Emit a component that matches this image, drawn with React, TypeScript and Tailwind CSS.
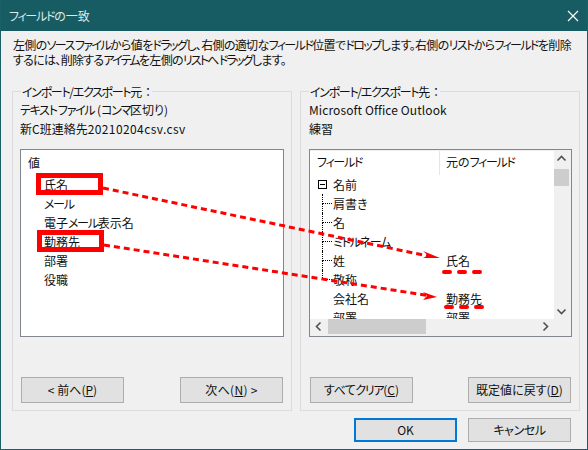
import React from "react";

function K({ children }: { children: React.ReactNode }) {
  return <span className="tracking-[-1.3px]">{children}</span>;
}

function K1({ children }: { children: React.ReactNode }) {
  return <span className="tracking-[-1.6px]">{children}</span>;
}

function K2({ children }: { children: React.ReactNode }) {
  return <span className="tracking-[-1.8px]">{children}</span>;
}

function Btn({ children, primary, cls }: { children: React.ReactNode; primary?: boolean; cls: string }) {
  return (
    <button
      className={`w-[103px] flex items-center justify-center bg-[#e1e1e1] text-[12px] text-[#111] ${
        primary ? "border-2 border-[#0078d7]" : "border border-[#adadad]"
      } ${cls}`}
    >
      {children}
    </button>
  );
}

function Chevron({ d }: { d: string }) {
  return (
    <svg width="15" height="15" viewBox="0 0 15 15" fill="none" stroke="#505050" strokeWidth="1.6">
      <path d={d} />
    </svg>
  );
}

const leftItems: React.ReactNode[] = [
  "氏名",
  <K>メール</K>,
  <>電子<K>メール</K>表示名</>,
  "勤務先",
  "部署",
  "役職",
];

function Connector({ last }: { last?: boolean }) {
  return (
    <div className="w-[10px] ml-[12px] h-full shrink-0 flex flex-col">
      <div className="h-[10px] border-l border-b border-dotted border-black" />
      {!last && <div className="flex-1 border-l border-dotted border-black" />}
    </div>
  );
}

const treeRows: { name: React.ReactNode; src?: string; connector?: boolean; last?: boolean }[] = [
  { name: "肩書き", connector: true },
  { name: "名", connector: true },
  { name: <K>ミドルネーム</K>, connector: true },
  { name: "姓", src: "氏名", connector: true },
  { name: "敬称", connector: true, last: true },
  { name: "会社名", src: "勤務先" },
  { name: "部署", src: "部署" },
];

export default function App() {
  return (
    <div
      className="relative w-[588px] h-[450px] overflow-hidden flex flex-col bg-[#f0f0f0] border-x border-b border-[#1b6066] text-[12px] leading-[16px] text-[#111] [font-feature-settings:'palt']"
      style={{ fontFamily: '"Noto Sans CJK JP", "Noto Sans", sans-serif' }}
    >
      <div className="h-[31px] shrink-0 bg-[#175c62] flex items-center justify-between pl-[8px] pr-[8px] text-[#dfe9ea]">
        <span><K>フィールド</K>の一致</span>
        <svg width="12" height="12" viewBox="0 0 12 12" stroke="#fff" strokeWidth="1.2" fill="none">
          <path d="M1 1L11 11M11 1L1 11" />
        </svg>
      </div>

      <div className="px-[12px] pt-[6px] whitespace-nowrap leading-[15px]">
        <div className="tracking-[-0.65px]">
          左側の<K1>ソース ファイル</K1>から値を<K1>ドラッグ</K1>し、右側の適切な<K1>フィールド</K1>位置で<K1>ドロップ</K1>します。右側の<K1>リスト</K1>から<K1>フィールド</K1>を削除
        </div>
        <div className="tracking-[-0.7px]">
          するには、削除する<K2>アイテム</K2>を左側の<K2>リスト</K2>へ<K2>ドラッグ</K2>します。
        </div>
      </div>

      <div className="flex gap-[8px] pl-[11px] mt-[24px]">
        <div className="w-[280px] h-[320px] border border-[#dcdcdc] flex flex-col px-[7px] whitespace-nowrap">
          <div className="-mt-[8px] ml-[1px] w-fit bg-[#f0f0f0] px-[1px] h-[16px]"><K>インポート/エクスポート</K>元 ：</div>
          <div className="h-[19px] leading-[19px]"><K>テキスト ファイル</K> (<K>コンマ</K>区切り)</div>
          <div className="h-[20px] leading-[20px]">新C班連絡先<span className="tracking-[0.4px]">20210204csv.csv</span></div>
          <div className="mt-[10px] h-[188px] bg-white border border-[#82878f] pl-[7px] pt-[3px]">
            <div className="h-[19px] leading-[19px]">値</div>
            <div className="pl-[16px] mt-[3px]">
              {leftItems.map((t, i) => (
                <div key={i} className="h-[19px] leading-[19px]">{t}</div>
              ))}
            </div>
          </div>
          <div className="mt-[40px] flex justify-between px-[1px]">
            <Btn cls="h-[26px]">
              <span>&lt; 前へ(<u>P</u>)</span>
            </Btn>
            <Btn cls="h-[26px]">
              <span className="tracking-[0.3px]">次へ(<u>N</u>) &gt;</span>
            </Btn>
          </div>
        </div>

        <div className="w-[280px] h-[320px] border border-[#dcdcdc] flex flex-col px-[8px] whitespace-nowrap">
          <div className="-mt-[8px] w-fit bg-[#f0f0f0] px-[1px] h-[16px]"><K>インポート/エクスポート</K>先 ：</div>
          <div className="h-[19px] leading-[19px] tracking-[0.1px]">Microsoft Office Outlook</div>
          <div className="h-[20px] leading-[20px]">練習</div>
          <div className="mt-[10px] h-[188px] w-[263px] bg-[#f0f0f0] border border-[#82878f] flex flex-col overflow-hidden">
            <div className="flex h-[169px] pt-[1px]">
              <div className="w-[244px] h-[168px] bg-white overflow-hidden">
                <div className="flex h-[24px]">
                  <div className="w-[130px] h-full pl-[7px] pb-[2px] border-r border-[#e5e5e5] flex items-center"><K>フィールド</K></div>
                  <div className="pl-[6px] pb-[2px] flex items-center">元の<K>フィールド</K></div>
                </div>
                <div className="flex h-[19px] items-center">
                  <div className="ml-[8px] w-[9px] h-[9px] border border-black flex items-center justify-center shrink-0">
                    <div className="w-[5px] h-px bg-black" />
                  </div>
                  <span className="ml-[6px]">名前</span>
                </div>
                {treeRows.map((r, i) => (
                  <div key={i} className="flex h-[19px] items-center leading-[19px]">
                    <div className="w-[23px] h-full shrink-0 flex">{r.connector && <Connector last={r.last} />}</div>
                    <div className="w-[113px]">{r.name}</div>
                    <div>{r.src}</div>
                  </div>
                ))}
              </div>
              <div className="w-[15px] h-full flex flex-col items-center">
                <Chevron d="M3.5 9.5L7.5 5.5L11.5 9.5" />
                <div className="w-full h-[17px] mt-[3px] bg-[#cdcdcd]" />
                <div className="flex-1" />
                <Chevron d="M3.5 5.5L7.5 9.5L11.5 5.5" />
              </div>
            </div>
            <div className="flex h-[15px] pl-[1px]">
              <Chevron d="M9.5 3.5L5.5 7.5L9.5 11.5" />
              <div className="w-[98px] h-full ml-[2px] bg-[#cdcdcd]" />
              <div className="flex-1" />
              <div className="mr-[18px]">
                <Chevron d="M5.5 3.5L9.5 7.5L5.5 11.5" />
              </div>
            </div>
          </div>
          <div className="mt-[40px] flex justify-between px-[1px] w-[263px]">
            <Btn cls="h-[26px]">
              <span><span className="tracking-[-0.5px]">すべて</span><K>クリア</K>(<u>C</u>)</span>
            </Btn>
            <Btn cls="h-[26px]">
              <span>既定値に戻す(<u>D</u>)</span>
            </Btn>
          </div>
        </div>
      </div>

      <div className="flex justify-end gap-[11px] pr-[16px] mt-[7px]">
        <Btn primary cls="h-[24px]">OK</Btn>
        <Btn cls="h-[24px]"><span className="tracking-[-0.4px]">キャンセル</span></Btn>
      </div>

      <svg className="absolute left-[-1px] top-0 pointer-events-none" width="588" height="450" fill="none">
        <rect x="38.5" y="175.5" width="62" height="17" stroke="#ff0000" strokeWidth="5" />
        <rect x="39.5" y="232.5" width="62" height="17" stroke="#ff0000" strokeWidth="5" />
        <line x1="103" y1="188" x2="428" y2="256" stroke="#ff0000" strokeWidth="3" strokeDasharray="6 4" />
        <polygon points="440,258 423,251 428,255.5 423,258" fill="#ff0000" />
        <line x1="104" y1="245" x2="428" y2="295.5" stroke="#ff0000" strokeWidth="3" strokeDasharray="6 4" />
        <polygon points="437,297 423,292 427,296 423,300" fill="#ff0000" />
        <line x1="444" y1="272" x2="482" y2="272" stroke="#ff0000" strokeWidth="4" strokeLinecap="round" strokeDasharray="6 9" />
        <line x1="446" y1="307" x2="483" y2="307" stroke="#ff0000" strokeWidth="4" strokeLinecap="round" strokeDasharray="6 9" />
      </svg>
    </div>
  );
}
